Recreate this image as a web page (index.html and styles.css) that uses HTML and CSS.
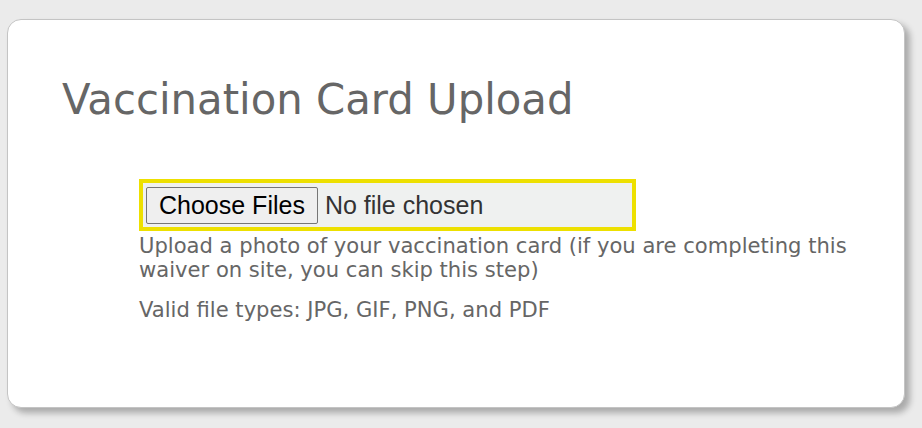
FILE: index.html
```html
<!DOCTYPE html>
<html lang="en">
<head>
    <meta charset="UTF-8">
    <meta name="viewport" content="width=device-width, initial-scale=1.0">
    <title>Vaccination Card Upload</title>
    <link rel="stylesheet" href="styles.css">
</head>
<body>
    <div class="card">
        <h1>Vaccination Card Upload</h1>
        <div class="upload-field">
            <input type="file" class="file-input" id="vaccinationCard" multiple accept=".jpg,.gif,.png,.pdf">
            <p class="help-text">Upload a photo of your vaccination card (if you are completing this waiver on site, you can skip this step)</p>
            <p class="help-text types">Valid file types: JPG, GIF, PNG, and PDF</p>
        </div>
    </div>
</body>
</html>
```

FILE: styles.css
```css
body {
    font-family: "DejaVu Sans", Verdana, sans-serif;
    background-color: #ebebeb;
    margin: 0;
    padding: 19px 17px 20px 7px;
}
.card {
    background-color: #fff;
    border: 1px solid #c4c4c4;
    border-radius: 14px;
    box-shadow: 5px 5px 6px rgba(0,0,0,0.28);
    box-sizing: border-box;
    height: 389px;
    padding: 55px 54px 0 54px;
}
h1 {
    font-weight: normal;
    font-size: 41.8px;
    color: #666;
    margin: 0 0 55px 0;
}
.upload-field {
    margin-left: 77px;
}
.file-input {
    display: block;
    box-sizing: border-box;
    width: 497px;
    border: 4px solid #ede000;
    background-color: #eff1f0;
    padding: 4px 3px 3px 3px;
    font-family: Arial, "Liberation Sans", sans-serif;
    font-size: 25px;
    line-height: 29px;
    color: #333;
}
.file-input::file-selector-button {
    font-family: Arial, "Liberation Sans", sans-serif;
    font-size: 25px;
    line-height: 29px;
    color: #000;
    background-color: #efefef;
    border: 1px solid #767676;
    border-radius: 2px;
    padding: 3px 12px;
    margin-right: 7px;
}
.help-text {
    font-size: 21.1px;
    line-height: 23.5px;
    color: #666;
    margin: 3px 0 0 0;
}
.help-text.types {
    margin-top: 17px;
}
```
